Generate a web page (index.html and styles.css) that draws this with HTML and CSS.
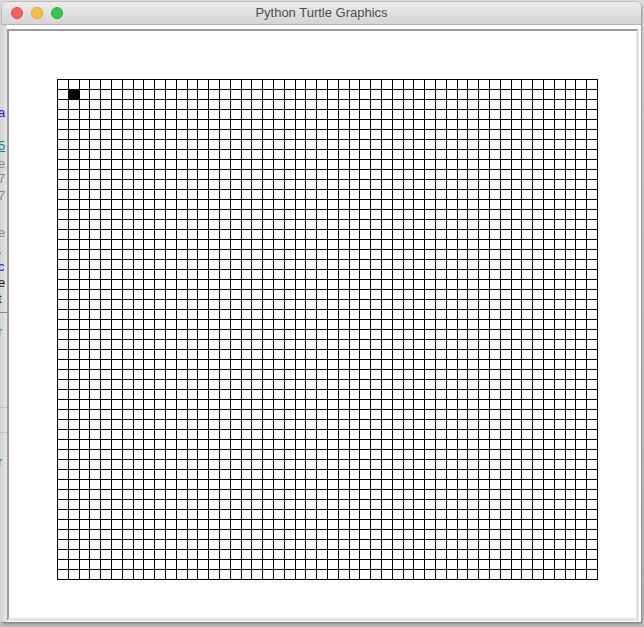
FILE: index.html
```html
<!DOCTYPE html>
<html>
<head>
<meta charset="utf-8">
<title>Python Turtle Graphics</title>
<link rel="stylesheet" href="styles.css">
</head>
<body>
<div class="behind">
  <span class="frag blue" style="top:81px">a</span>
  <span class="frag teal under" style="top:114px">5</span>
  <span class="frag gray" style="top:132px">e</span>
  <span class="frag gray" style="top:147px">7</span>
  <span class="frag gray" style="top:164px">7</span>
  <span class="frag gray" style="top:201px">e</span>
  <span class="frag dark" style="top:218px">.</span>
  <span class="frag blue" style="top:235px">c</span>
  <span class="frag dark" style="top:251px">e</span>
  <span class="frag dark" style="top:267px">t</span>
  <span class="rule" style="top:287px"></span>
  <span class="frag teal" style="top:300px">r</span>
  <span class="rule faint" style="top:382px"></span>
  <span class="rule faint" style="top:407px"></span>
  <span class="frag teal" style="top:430px">r</span>
</div>
<div class="window">
  <div class="titlebar">
    <div class="lights">
      <span class="light red"></span>
      <span class="light yellow"></span>
      <span class="light green"></span>
    </div>
    <div class="title">Python Turtle Graphics</div>
  </div>
  <div class="content">
    <div class="canvas">
      <svg class="grid" width="541" height="501" viewBox="0 0 541 501" shape-rendering="crispEdges">
        <rect x="11" y="10" width="12" height="11" fill="#000"/>
        <path stroke="#000" stroke-width="1" fill="none" d="M0.5 0V501M11.5 0V501M22.5 0V501M32.5 0V501M43.5 0V501M54.5 0V501M65.5 0V501M76.5 0V501M86.5 0V501M97.5 0V501M108.5 0V501M119.5 0V501M130.5 0V501M140.5 0V501M151.5 0V501M162.5 0V501M173.5 0V501M184.5 0V501M194.5 0V501M205.5 0V501M216.5 0V501M227.5 0V501M238.5 0V501M248.5 0V501M259.5 0V501M270.5 0V501M281.5 0V501M292.5 0V501M302.5 0V501M313.5 0V501M324.5 0V501M335.5 0V501M346.5 0V501M356.5 0V501M367.5 0V501M378.5 0V501M389.5 0V501M400.5 0V501M410.5 0V501M421.5 0V501M432.5 0V501M443.5 0V501M454.5 0V501M464.5 0V501M475.5 0V501M486.5 0V501M497.5 0V501M508.5 0V501M518.5 0V501M529.5 0V501M540.5 0V501"/>
        <path stroke="#000" stroke-width="1" fill="none" d="M0 0.5H541M0 10.5H541M0 20.5H541M0 30.5H541M0 40.5H541M0 50.5H541M0 60.5H541M0 70.5H541M0 80.5H541M0 90.5H541M0 100.5H541M0 110.5H541M0 120.5H541M0 130.5H541M0 140.5H541M0 150.5H541M0 160.5H541M0 170.5H541M0 180.5H541M0 190.5H541M0 200.5H541M0 210.5H541M0 220.5H541M0 230.5H541M0 240.5H541M0 250.5H541M0 260.5H541M0 270.5H541M0 280.5H541M0 290.5H541M0 300.5H541M0 310.5H541M0 320.5H541M0 330.5H541M0 340.5H541M0 350.5H541M0 360.5H541M0 370.5H541M0 380.5H541M0 390.5H541M0 400.5H541M0 410.5H541M0 420.5H541M0 430.5H541M0 440.5H541M0 450.5H541M0 460.5H541M0 470.5H541M0 480.5H541M0 490.5H541M0 500.5H541"/>
      </svg>
    </div>
  </div>
</div>
</body>
</html>
```
FILE: styles.css
```css
html, body {
  margin: 0;
  padding: 0;
}
body {
  width: 644px;
  height: 627px;
  overflow: hidden;
  background: linear-gradient(#d9d9d9, #bdbdbd);
  position: relative;
  font-family: "Liberation Sans", "Noto Sans", sans-serif;
}
.behind {
  position: absolute;
  left: 0;
  top: 25px;
  width: 7px;
  height: 597px;
  background: linear-gradient(90deg, #d2d2d2, #e6e6e6);
  overflow: hidden;
  z-index: 2;
}
.frag {
  position: absolute;
  left: -2px;
  font-size: 13px;
  line-height: 14px;
}
.rule {
  position: absolute;
  left: 0;
  width: 7px;
  height: 1px;
  background: #888;
}
.rule.faint { background: #c4c4c4; }
.blue { color: #1a1adb; }
.teal { color: #1a7ea0; }
.gray { color: #8a8a8a; }
.dark { color: #222; }
.under { text-decoration: underline; }

.window {
  margin: 2px 0 0 2px;
  width: 639px;
  height: 620px;
  background: #fff;
  border-radius: 5px 5px 0 0;
  box-shadow: 0 0 0 1px rgba(0,0,0,0.12), 1px 2px 3px rgba(0,0,0,0.25);
  display: flex;
  flex-direction: column;
}
.titlebar {
  height: 22px;
  flex: none;
  border-radius: 5px 5px 0 0;
  background: linear-gradient(#ebebeb, #d4d4d4);
  border-bottom: 1px solid #b1b1b1;
  display: flex;
  align-items: center;
  position: relative;
}
.lights {
  display: flex;
  gap: 8px;
  padding-left: 9px;
}
.light {
  width: 12px;
  height: 12px;
  border-radius: 50%;
  box-sizing: border-box;
}
.red { background: #fc605c; border: 1px solid #df4744; }
.yellow { background: #fdbc40; border: 1px solid #de9f34; }
.green { background: #34c84a; border: 1px solid #27aa35; }
.title {
  position: absolute;
  left: 0;
  right: 0;
  top: 0;
  line-height: 22px;
  text-align: center;
  font-size: 13px;
  color: #4d4d4d;
  pointer-events: none;
}
.content {
  flex: 1;
  padding: 4px 2px 1px 5px;
  display: flex;
}
.canvas {
  flex: 1;
  box-sizing: border-box;
  border-style: solid;
  border-width: 2px 3px 3px 2px;
  border-color: #9b9b9b #e3e3e3 #e3e3e3 #9b9b9b;
  background: #fff;
  padding: 48px 0 0 48px;
}
.grid {
  display: block;
}
```
